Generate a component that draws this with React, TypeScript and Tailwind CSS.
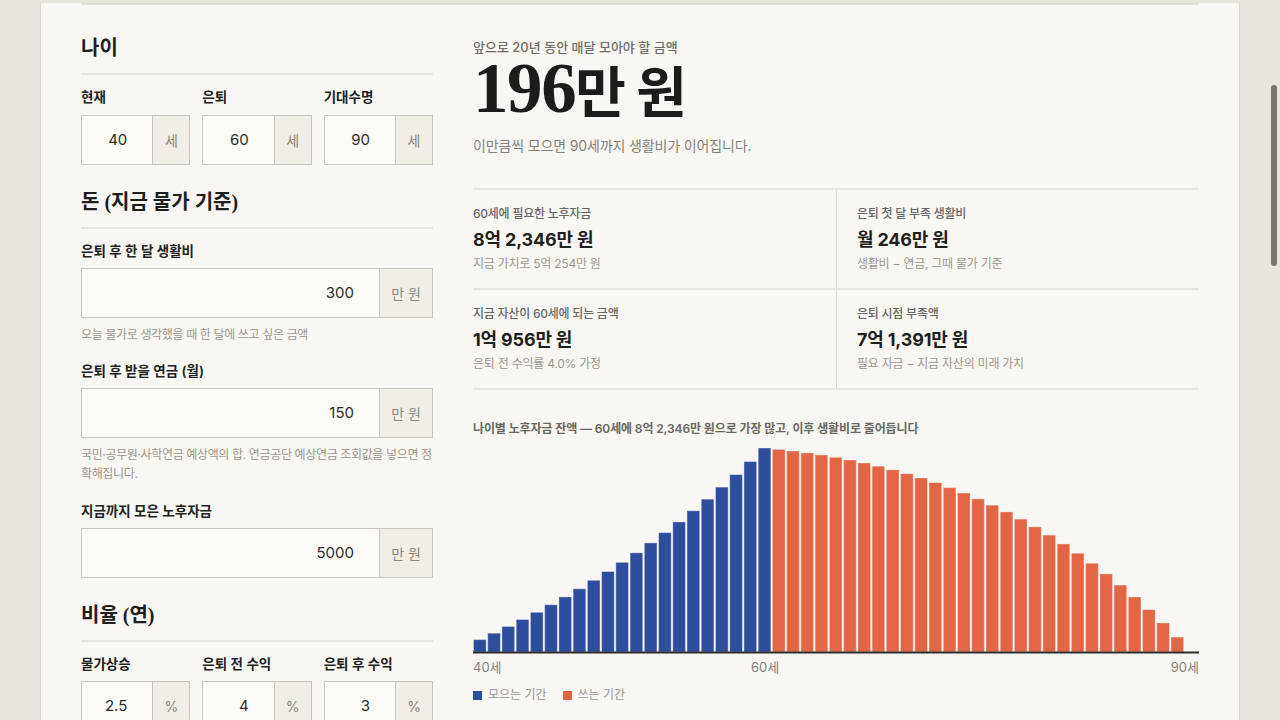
import React from 'react';

const SANS = "font-['Inter','Noto_Sans_CJK_KR',sans-serif]";

// balance per age, 40..90 (51 slots)
const buildBalances = () => {
    const need = 82346;
    const start = 5000;
    const m = Math.pow(1.04, 1 / 12) - 1;
    const fvStart = start * Math.pow(1.04, 20);
    const monthly = (need - fvStart) / ((Math.pow(1.04, 20) - 1) / m);
    const out: number[] = [];
    for (let k = 0; k <= 20; k++) {
        out.push(start * Math.pow(1.04, k) + monthly * ((Math.pow(1.04, k) - 1) / m));
    }
    let sum = 0;
    for (let j = 0; j < 30; j++) sum += Math.pow(1.025 / 1.03, j);
    const w60 = need / sum;
    let b = out[20];
    for (let t = 61; t <= 89; t++) {
        b = (b - w60 * Math.pow(1.025, t - 61)) * 1.03;
        out.push(Math.max(b, 0));
    }
    out.push(0);
    return { out, need };
};

const Field = ({ value, unit, wide }: { value: string; unit: string; wide?: boolean }) => (
    <div className="flex h-[50px] border border-[#c9c5be] bg-[#fcfbf8]">
        <div className="flex-1 flex items-center justify-end pr-[25px] text-[15px] text-[#2b2b2b]">{value}</div>
        <div className={`${wide ? 'w-[53px]' : 'w-[37px]'} flex items-center justify-center border-l border-[#c9c5be] bg-[#f1ede7] text-[14px] text-[#8a8782]`}>
            {unit}
        </div>
    </div>
);

const Label = ({ children, tight }: { children: React.ReactNode; tight?: boolean }) => (
    <div className={`text-[13.5px] font-semibold leading-[20px] text-[#222] ${tight ? 'mb-[7px]' : 'mb-2'}`}>{children}</div>
);

const Heading = ({ children }: { children: React.ReactNode }) => (
    <h2 className="pb-[10px] border-b-2 border-[#e8e5df] text-[20px] leading-[30px] font-semibold text-[#1e1e1c] font-['Liberation_Serif','Noto_Sans_CJK_KR',serif]">
        {children}
    </h2>
);

const Help = ({ children }: { children: React.ReactNode }) => (
    <p className="mt-[7px] text-[12px] leading-[19px] tracking-[-0.03em] text-[#9a968f]">{children}</p>
);

const Stat = ({ label, value, sub, right }: { label: string; value: string; sub: string; right?: boolean }) => (
    <div className={`py-[15px] ${right ? 'pl-[20px] border-l border-[#dcd8d1]' : 'pr-[20px]'}`}>
        <div className="text-[12px] leading-[18px] font-medium tracking-[-0.02em] text-[#666]">{label}</div>
        <div className="mt-[4px] text-[18px] leading-[26px] font-bold tracking-[-0.01em] text-[#1f1f1d]">{value}</div>
        <div className="mt-[2px] text-[12px] leading-[18px] tracking-[-0.02em] text-[#9b978f]">{sub}</div>
    </div>
);

const Chart = () => {
    const { out, need } = buildBalances();
    const W = 726;
    const slot = W / 51;
    return (
        <svg width={W} height={212} className="block">
            {out.map((v, i) => {
                const h = (v / need) * 204;
                if (h <= 0) return null;
                return (
                    <rect
                        key={i}
                        x={i * slot + 0.5}
                        y={210 - h}
                        width={slot - 1.6}
                        height={h}
                        fill={i <= 20 ? '#2f4d9d' : '#e26644'}
                        stroke="rgba(255,255,255,0.35)"
                        strokeWidth={1}
                    />
                );
            })}
            <rect x={0} y={209.5} width={W} height={2} fill="#2e2e2b" />
        </svg>
    );
};

export default function App() {
    return (
        <div className={`h-screen overflow-hidden bg-[#e8e5df] ${SANS}`}>
            <div className="mx-[40px] h-full border-x border-[#dcd8d1] bg-[#f8f7f3] px-[40px]">
                <div className="mt-[3px] border-t-2 border-[#e3e0da]" />
                <div className="flex gap-[40px]">
                    {/* inputs */}
                    <div className="w-[352px] shrink-0 pt-[28px]">
                        <Heading>나이</Heading>
                        <div className="mt-[12px] grid grid-cols-3 gap-[12px]">
                            <div>
                                <Label>현재</Label>
                                <Field value="40" unit="세" />
                            </div>
                            <div>
                                <Label>은퇴</Label>
                                <Field value="60" unit="세" />
                            </div>
                            <div>
                                <Label>기대수명</Label>
                                <Field value="90" unit="세" />
                            </div>
                        </div>

                        <div className="mt-[22px]">
                            <Heading>돈 (지금 물가 기준)</Heading>
                        </div>
                        <div className="mt-[12px]">
                            <Label tight>은퇴 후 한 달 생활비</Label>
                            <Field value="300" unit="만 원" wide />
                            <Help>오늘 물가로 생각했을 때 한 달에 쓰고 싶은 금액</Help>
                        </div>
                        <div className="mt-[17px]">
                            <Label tight>은퇴 후 받을 연금 (월)</Label>
                            <Field value="150" unit="만 원" wide />
                            <Help>국민·공무원·사학연금 예상액의 합. 연금공단 예상연금 조회값을 넣으면 정확해집니다.</Help>
                        </div>
                        <div className="mt-[18px]">
                            <Label tight>지금까지 모은 노후자금</Label>
                            <Field value="5000" unit="만 원" wide />
                        </div>

                        <div className="mt-[22px]">
                            <Heading>비율 (연)</Heading>
                        </div>
                        <div className="mt-[12px] grid grid-cols-3 gap-[12px]">
                            <div>
                                <Label tight>물가상승</Label>
                                <Field value="2.5" unit="%" />
                            </div>
                            <div>
                                <Label tight>은퇴 전 수익</Label>
                                <Field value="4" unit="%" />
                            </div>
                            <div>
                                <Label tight>은퇴 후 수익</Label>
                                <Field value="3" unit="%" />
                            </div>
                        </div>
                    </div>

                    {/* result */}
                    <div className="flex-1 pt-[32px]">
                        <div className="text-[13px] leading-[20px] font-medium text-[#6f6c66]">앞으로 20년 동안 매달 모아야 할 금액</div>
                        <div className="flex h-[62px] items-baseline font-bold text-[#1c1d1a] font-['Liberation_Serif','Noto_Sans_CJK_KR',serif]">
                            <span className="text-[71px] leading-[62px] tracking-[-0.02em]">196</span>
                            <span className="text-[55px] leading-[62px] tracking-[-0.03em] whitespace-pre">만 원</span>
                        </div>
                        <p className="mt-[17px] text-[14px] leading-[20px] tracking-[-0.01em] text-[#85817b]">이만큼씩 모으면 90세까지 생활비가 이어집니다.</p>

                        <div className="mt-[32px] grid grid-cols-2 border-t-2 border-[#e8e5df]">
                            <Stat label="60세에 필요한 노후자금" value="8억 2,346만 원" sub="지금 가치로 5억 254만 원" />
                            <Stat label="은퇴 첫 달 부족 생활비" value="월 246만 원" sub="생활비 − 연금, 그때 물가 기준" right />
                        </div>
                        <div className="grid grid-cols-2 border-y-2 border-[#e8e5df]">
                            <Stat label="지금 자산이 60세에 되는 금액" value="1억 956만 원" sub="은퇴 전 수익률 4.0% 가정" />
                            <Stat label="은퇴 시점 부족액" value="7억 1,391만 원" sub="필요 자금 − 지금 자산의 미래 가치" right />
                        </div>

                        <div className="mt-[30px] text-[12px] leading-[18px] font-semibold tracking-[-0.01em] text-[#6a6761]">
                            나이별 노후자금 잔액 — 60세에 8억 2,346만 원으로 가장 많고, 이후 생활비로 줄어듭니다
                        </div>
                        <div className="mt-[4px]">
                            <Chart />
                        </div>
                        <div className="relative mt-[4px] flex justify-between text-[13px] leading-[18px] text-[#86827c]">
                            <span>40세</span>
                            <span className="absolute left-[292px] -translate-x-1/2">60세</span>
                            <span>90세</span>
                        </div>
                        <div className="mt-[10px] flex items-center gap-[16px] text-[12px] leading-[18px] text-[#9a968f]">
                            <span className="flex items-center gap-[6px]">
                                <span className="w-[9px] h-[9px] bg-[#2f4d9d]" />
                                모으는 기간
                            </span>
                            <span className="flex items-center gap-[6px]">
                                <span className="w-[9px] h-[9px] bg-[#e26644]" />
                                쓰는 기간
                            </span>
                        </div>
                    </div>
                </div>
            </div>
            <div className="fixed right-[3px] top-[85px] w-[6px] h-[181px] rounded-full bg-[#77766f]" />
        </div>
    );
}
